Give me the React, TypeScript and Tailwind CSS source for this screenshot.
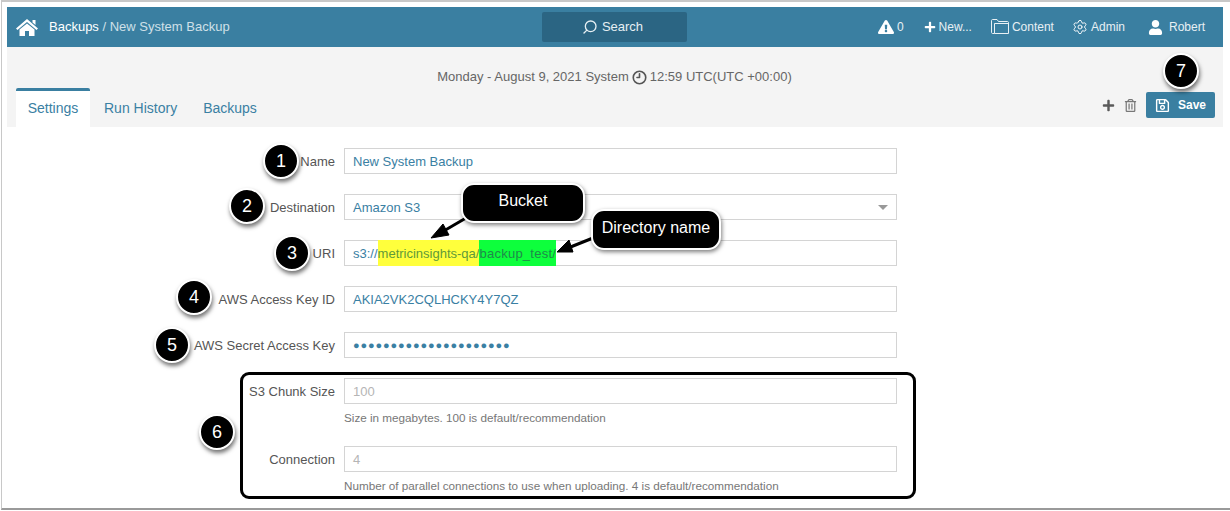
import { FaExclamationTriangle, FaPlus, FaRegSave, FaRegTrashAlt, FaUser } from 'react-icons/fa';
import { Clock9, Search, Settings } from 'lucide-react';

function Marker({ n, className }: { n: number; className: string }) {
  return (
    <div
      className={`absolute flex h-[36px] w-[36px] items-center justify-center rounded-full border-[2px] border-white bg-black text-[18px] text-white shadow-[1px_3px_4px_rgba(0,0,0,0.55)] ${className}`}
    >
      {n}
    </div>
  );
}

function Field({ label, children, muted }: { label: string; children: React.ReactNode; muted?: boolean }) {
  return (
    <div className="flex items-center">
      <div className="w-[328px] pt-[1px] text-right text-[13px] text-[#555]">{label}</div>
      <div
        className={`ml-[9px] flex h-[26px] w-[553px] items-center border border-[#d4d4d4] pl-[8px] pt-[1px] text-[13px] ${
          muted ? 'text-[#b5b5b5]' : 'text-[#3a80a3]'
        }`}
      >
        {children}
      </div>
    </div>
  );
}

function Hint({ children }: { children: React.ReactNode }) {
  return <div className="ml-[337px] mt-[7px] text-[11.7px] leading-[14px] text-[#777]">{children}</div>;
}

function HomeIcon() {
  return (
    <svg width="22" height="17" viewBox="0 0 22 17" fill="white">
      <path d="M11 0L22 9.5L20.5 11L11 3L1.5 11L0 9.5Z" />
      <path d="M16.5 1H19.5V6L16.5 3.4Z" />
      <path d="M3.5 10.5L11 4.5L18.5 10.5V17H13V12H9V17H3.5Z" />
    </svg>
  );
}

function FolderIcon() {
  return (
    <svg width="18" height="16" viewBox="0 0 18 16" fill="none" stroke="currentColor" strokeWidth="1">
      <path d="M3.5 14.5H1.5C1 14.5.5 14 .5 13.5V1.5C.5 1 1 .5 1.5 .5H6L7.5 2.5H16.5C17 2.5 17.5 3 17.5 3.5V14.5Z" />
      <path d="M3.5 14.5V4.5H17.5" />
    </svg>
  );
}

export default function App() {
  return (
    <div className="relative h-[511px] w-[1230px] overflow-hidden bg-white font-['Liberation_Sans',Arial,sans-serif]">
      <div className="ml-[1px] h-[510px] border-l border-t-2 border-b-2 border-[#c8c8c8] border-b-[#9a9a9a] pl-[5px] pr-[7px] pt-[5px]">
        {/* Top bar */}
        <div className="flex h-[40px] items-center bg-[#3a7fa1] text-[12px] text-white">
          <span className="ml-[9px]"><HomeIcon /></span>
          <div className="ml-[11px] w-[493px] text-[13px]">
            Backups <span className="text-[#cfe0e8]">/ New System Backup</span>
          </div>
          <div className="flex h-[30px] w-[145px] items-center justify-center gap-[4px] rounded-[2px] bg-[#2b6583] pr-[4px] text-[13px] text-[#e6eff3]">
            <Search className="h-[16px] w-[16px] -scale-x-100" strokeWidth={2} />
            Search
          </div>
          <div className="ml-auto flex items-center pr-[18px] text-[#e8f0f4]">
            <FaExclamationTriangle className="text-[16px] text-white" />
            <span className="ml-[3px]">0</span>
            <FaPlus className="ml-[20px] text-[12px] text-white" />
            <span className="ml-[3px]">New...</span>
            <span className="ml-[19px]"><FolderIcon /></span>
            <span className="ml-[3px]">Content</span>
            <Settings className="ml-[18px] h-[16px] w-[16px] text-white" strokeWidth={1.4} />
            <span className="ml-[3px]">Admin</span>
            <FaUser className="ml-[23px] text-[15px] text-white" />
            <span className="ml-[6px]">Robert</span>
          </div>
        </div>

        {/* Sub header */}
        <div className="h-[80px] bg-[#f4f4f4]">
          <div className="flex h-[41px] items-end justify-center pb-[2px] pr-[1px] text-[13px] text-[#666]">
            Monday - August 9, 2021 System
            <Clock9 className="mx-[3px] mb-[1px] h-[15px] w-[15px] text-[#555]" strokeWidth={2.6} />
            12:59 UTC(UTC +00:00)
          </div>
          <div className="flex h-[39px] items-start justify-between pl-[9px] pr-[8px]">
            <div className="flex text-[14px] text-[#3a80a3]">
              <div className="flex h-[39px] w-[74px] items-center justify-center rounded-t-[2px] border-t-[3px] border-[#3a7fa1] bg-white pb-[2px]">
                Settings
              </div>
              <div className="ml-[14px] flex h-[39px] items-center pt-[2px]">Run History</div>
              <div className="ml-[26px] flex h-[39px] items-center pt-[2px]">Backups</div>
            </div>
            <div className="mt-[4px] flex items-center">
              <FaPlus className="text-[13px] text-[#5a5a5a]" />
              <FaRegTrashAlt className="ml-[9px] text-[13px] text-[#777]" />
              <div className="ml-[9px] flex h-[26px] w-[69px] items-center justify-center gap-[8px] rounded-[2px] bg-[#3a7fa1] text-[12px] font-bold text-white">
                <FaRegSave className="text-[15px]" />
                Save
              </div>
            </div>
          </div>
        </div>

        {/* Form */}
        <div className="pt-[21px]">
          <div className="flex flex-col gap-[20px]">
            <Field label="Name">New System Backup</Field>
            <Field label="Destination">
              Amazon S3
              <span className="ml-auto mr-[8px] h-0 w-0 border-x-[5px] border-t-[5px] border-x-transparent border-t-[#999]" />
            </Field>
            <Field label="URI">
              <span>s3://</span>
              <span className="-mt-[1px] flex h-[26px] items-center bg-[#ffff3c] pt-[1px] text-[#5f9a3a]">metricinsights-qa/</span>
              <span className="-mt-[1px] flex h-[26px] items-center bg-[#0dff3c] pt-[1px] tracking-[0.25px] text-[#1f8a4a]">backup_test/</span>
            </Field>
            <Field label="AWS Access Key ID">AKIA2VK2CQLHCKY4Y7QZ</Field>
            <Field label="AWS Secret Access Key">
              <span className="text-[11px] tracking-[0.85px]">●●●●●●●●●●●●●●●●●●●●●</span>
            </Field>
          </div>
          <div className="mt-[20px]">
            <Field label="S3 Chunk Size" muted>100</Field>
            <Hint>Size in megabytes. 100 is default/recommendation</Hint>
            <div className="mt-[21px]">
              <Field label="Connection" muted>4</Field>
            </div>
            <Hint>Number of parallel connections to use when uploading. 4 is default/recommendation</Hint>
          </div>
        </div>
      </div>

      {/* Annotations drawn over the screenshot */}
      <div className="absolute left-[240px] top-[372px] h-[127px] w-[676px] rounded-[9px] border-[3px] border-black" />
      <svg className="absolute left-0 top-0" width="1230" height="511" fill="black" stroke="black">
        <line x1="466" y1="218" x2="442" y2="232" strokeWidth="3" />
        <polygon points="431,238 443,224 449,235" />
        <line x1="593" y1="238" x2="568" y2="248" strokeWidth="3" />
        <polygon points="557,252 569,240 573,252" />
      </svg>
      <div className="absolute left-[461px] top-[183px] flex h-[40px] w-[124px] items-center justify-center rounded-[13px] border-[2px] border-white bg-black pb-[4px] text-[16px] text-white shadow-[1px_2px_4px_rgba(0,0,0,0.5)]">
        Bucket
      </div>
      <div className="absolute left-[591px] top-[209px] flex h-[41px] w-[130px] items-center justify-center rounded-[13px] border-[2px] border-white bg-black pb-[3px] text-[16px] text-white shadow-[1px_2px_4px_rgba(0,0,0,0.5)]">
        Directory name
      </div>
      <Marker n={1} className="left-[263px] top-[143px]" />
      <Marker n={2} className="left-[229px] top-[188px]" />
      <Marker n={3} className="left-[274px] top-[235px]" />
      <Marker n={4} className="left-[176px] top-[279px]" />
      <Marker n={5} className="left-[154px] top-[327px]" />
      <Marker n={6} className="left-[199px] top-[414px]" />
      <Marker n={7} className="left-[1163px] top-[53px]" />
    </div>
  );
}
